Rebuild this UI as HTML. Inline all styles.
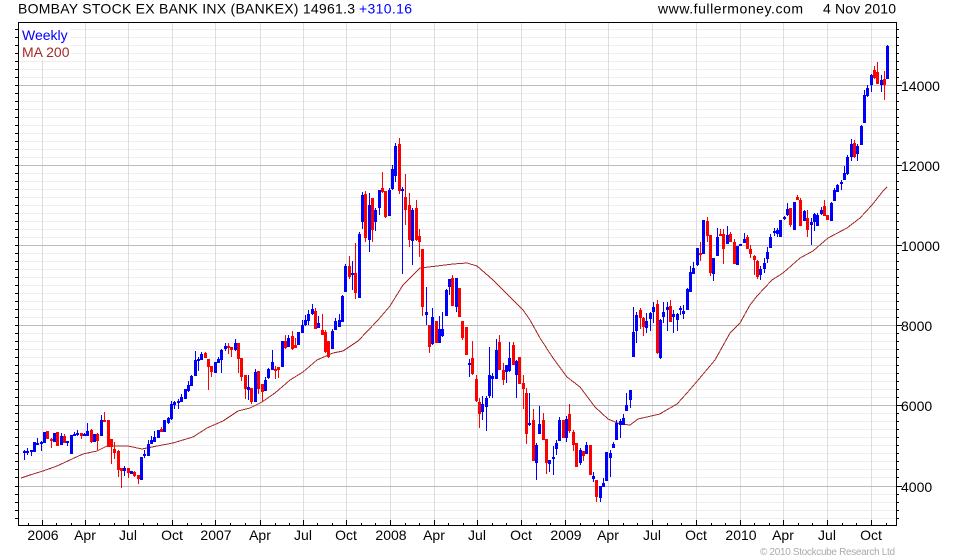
<!DOCTYPE html>
<html><head><meta charset="utf-8"><title>Bombay Stock Ex Bank Inx</title>
<style>html,body{margin:0;padding:0;background:#fff}svg{display:block}text{font-family:"Liberation Sans",Arial,sans-serif;font-size:14px;fill:#000}</style></head>
<body>
<svg xmlns="http://www.w3.org/2000/svg" width="980" height="560" viewBox="0 0 980 560">
<rect width="980" height="560" fill="#fff"/>
<g shape-rendering="crispEdges" fill="none">
<path d="M457.5 29V485M457.5 486V525" stroke="#eee" stroke-width="877" stroke-dasharray="1 7"/>
<path d="M42.5 23V525M85.5 23V525M128.5 23V525M172.5 23V525M215.5 23V525M260.5 23V525M303.5 23V525M346.5 23V525M390.5 23V525M434.5 23V525M477.5 23V525M521.5 23V525M565.5 23V525M608.5 23V525M652.5 23V525M696.5 23V525M740.5 23V525M783.5 23V525M827.5 23V525M871.5 23V525" stroke="#ddd"/>
<path d="M19 85.5H896M19 165.5H896M19 245.5H896M19 325.5H896M19 405.5H896M19 486.5H896" stroke="#bbb"/>
<rect x="19" y="23" width="51" height="37" fill="#fff" stroke="none"/>
<path d="M21 478L30 475L43 471L57 466L72 459L83 454L97 451L107 446L128 446L142 449L157 446L173 443L193 437L207 428L223 421L238 411L250 408L262 402L275 393L290 380L303 372L317 360L333 353L343 351L358 341L378 320L390 306L403 285L420 268L437 266L453 264L467 263L477 266L493 280L510 297L523 310L530 320L540 338L553 358L567 377L580 387L595 407L608 419L620 424L630 425L638 419L660 414L663 412L677 404L687 393L699 379L715 360L730 333L740 323L750 305L757 296L772 280L783 273L800 258L813 251L828 238L847 228L860 218L872 205L883 191L887 187" stroke="#a52a2a" stroke-width="1"/>
</g>
<g shape-rendering="crispEdges">
<path fill="#00f" d="M24 450h1V460h-1zM23 451h3V453h-3zM27 448h1V455h-1zM26 451h3V453h-3zM31 450h1V456h-1zM30 450h3V452h-3zM33 442h3V452h-3zM37 438h1V445h-1zM36 443h3V445h-3zM41 441h1V451h-1zM40 442h3V444h-3zM43 432h3V443h-3zM53 433h3V442h-3zM61 433h1V445h-1zM60 436h3V445h-3zM67 441h1V446h-1zM66 441h3V443h-3zM70 435h3V454h-3zM74 432h1V436h-1zM73 434h3V436h-3zM77 430h1V436h-1zM76 433h3V435h-3zM84 433h1V436h-1zM83 434h3V436h-3zM87 423h1V436h-1zM86 431h3V436h-3zM93 434h3V442h-3zM101 415h1V436h-1zM100 420h3V436h-3zM124 466h1V476h-1zM123 468h3V471h-3zM130 471h3V474h-3zM140 457h3V480h-3zM144 450h1V458h-1zM143 454h3V456h-3zM148 440h1V456h-1zM147 444h3V456h-3zM151 436h1V444h-1zM150 440h3V444h-3zM154 431h1V442h-1zM153 437h3V442h-3zM157 430h3V438h-3zM163 420h3V432h-3zM168 417h1V424h-1zM167 418h3V423h-3zM171 401h1V420h-1zM170 404h3V419h-3zM174 401h1V409h-1zM173 402h3V405h-3zM178 399h1V409h-1zM177 401h3V403h-3zM181 394h1V402h-1zM180 397h3V402h-3zM184 389h3V399h-3zM188 381h1V392h-1zM187 385h3V391h-3zM191 375h1V386h-1zM190 376h3V386h-3zM195 351h1V376h-1zM194 360h3V376h-3zM198 357h1V371h-1zM197 359h3V361h-3zM201 352h1V360h-1zM200 354h3V360h-3zM214 362h3V373h-3zM218 357h1V363h-1zM217 359h3V363h-3zM221 349h1V373h-1zM220 350h3V360h-3zM225 343h1V351h-1zM224 346h3V349h-3zM235 339h1V351h-1zM234 343h3V350h-3zM248 375h1V400h-1zM247 387h3V390h-3zM255 369h1V402h-1zM254 372h3V402h-3zM265 377h1V391h-1zM264 380h3V391h-3zM268 368h1V379h-1zM267 369h3V378h-3zM272 350h1V370h-1zM271 362h3V370h-3zM281 341h3V367h-3zM288 335h1V347h-1zM287 338h3V347h-3zM297 332h3V345h-3zM302 320h1V333h-1zM301 325h3V333h-3zM305 315h1V326h-1zM304 320h3V325h-3zM308 310h1V325h-1zM307 314h3V321h-3zM312 304h1V315h-1zM311 309h3V314h-3zM318 316h1V328h-1zM317 323h3V328h-3zM332 329h1V349h-1zM331 331h3V349h-3zM335 318h1V330h-1zM334 321h3V330h-3zM339 314h1V327h-1zM338 320h3V327h-3zM342 295h1V322h-1zM341 296h3V322h-3zM345 264h1V292h-1zM344 266h3V292h-3zM352 261h1V290h-1zM351 273h3V275h-3zM359 232h1V298h-1zM358 234h3V298h-3zM362 192h1V229h-1zM361 195h3V222h-3zM369 193h1V252h-1zM368 205h3V240h-3zM375 208h1V231h-1zM374 210h3V222h-3zM379 190h1V215h-1zM378 190h3V208h-3zM389 188h1V216h-1zM388 190h3V216h-3zM392 165h1V190h-1zM391 169h3V189h-3zM395 143h1V182h-1zM394 146h3V176h-3zM402 187h1V274h-1zM401 189h3V191h-3zM412 208h1V265h-1zM411 210h3V241h-3zM426 287h1V325h-1zM425 312h3V315h-3zM432 308h1V345h-1zM431 317h3V344h-3zM439 316h1V343h-1zM438 329h3V343h-3zM442 312h1V337h-1zM441 329h3V336h-3zM446 289h1V316h-1zM445 290h3V316h-3zM449 279h1V295h-1zM448 279h3V287h-3zM456 278h1V312h-1zM455 278h3V307h-3zM469 359h1V377h-1zM468 363h3V365h-3zM482 396h1V420h-1zM481 404h3V412h-3zM486 396h1V431h-1zM485 398h3V407h-3zM489 347h1V398h-1zM488 375h3V396h-3zM492 373h1V398h-1zM491 376h3V379h-3zM496 339h1V379h-1zM495 350h3V379h-3zM506 365h1V383h-1zM505 365h3V372h-3zM509 342h1V372h-1zM508 358h3V371h-3zM516 360h1V398h-1zM515 361h3V375h-3zM529 393h1V426h-1zM528 423h3V425h-3zM536 443h1V480h-1zM535 445h3V463h-3zM539 406h1V434h-1zM538 424h3V434h-3zM549 460h1V472h-1zM548 460h3V464h-3zM553 446h1V475h-1zM552 457h3V459h-3zM556 440h1V455h-1zM555 443h3V449h-3zM559 417h1V441h-1zM558 420h3V441h-3zM566 416h1V442h-1zM565 419h3V438h-3zM580 448h1V465h-1zM579 450h3V463h-3zM586 442h1V454h-1zM585 445h3V454h-3zM593 472h1V482h-1zM592 476h3V479h-3zM600 486h1V502h-1zM599 486h3V498h-3zM603 478h1V487h-1zM602 483h3V487h-3zM605 452h3V481h-3zM610 450h1V477h-1zM609 453h3V458h-3zM613 442h1V448h-1zM612 444h3V448h-3zM616 420h1V440h-1zM615 423h3V440h-3zM620 419h1V438h-1zM619 421h3V425h-3zM623 414h1V425h-1zM622 418h3V425h-3zM626 393h1V411h-1zM625 405h3V411h-3zM630 390h1V408h-1zM629 390h3V400h-3zM633 307h1V357h-1zM632 332h3V357h-3zM636 312h1V343h-1zM635 315h3V331h-3zM646 313h1V333h-1zM645 321h3V328h-3zM650 312h1V331h-1zM649 313h3V319h-3zM653 302h1V323h-1zM652 307h3V312h-3zM660 319h1V359h-1zM659 320h3V358h-3zM663 302h1V323h-1zM662 312h3V317h-3zM667 302h1V331h-1zM666 307h3V310h-3zM673 310h1V333h-1zM672 314h3V317h-3zM677 313h1V331h-1zM676 314h3V320h-3zM680 306h1V315h-1zM679 308h3V310h-3zM683 305h1V319h-1zM682 311h3V314h-3zM687 288h1V310h-1zM686 289h3V310h-3zM690 266h1V292h-1zM689 272h3V292h-3zM693 262h1V274h-1zM692 268h3V274h-3zM697 248h1V266h-1zM696 248h3V265h-3zM702 220h3V254h-3zM713 258h1V281h-1zM712 258h3V274h-3zM717 228h1V256h-1zM716 237h3V256h-3zM727 226h1V244h-1zM726 235h3V244h-3zM736 246h3V265h-3zM740 244h1V246h-1zM739 244h3V246h-3zM744 233h1V243h-1zM743 239h3V243h-3zM760 266h1V280h-1zM759 269h3V275h-3zM764 258h1V273h-1zM763 263h3V269h-3zM767 247h1V263h-1zM766 252h3V259h-3zM770 234h1V248h-1zM769 237h3V248h-3zM774 228h1V236h-1zM773 231h3V233h-3zM777 228h1V237h-1zM776 230h3V234h-3zM779 220h3V237h-3zM784 216h1V220h-1zM783 217h3V219h-3zM787 203h1V216h-1zM786 209h3V215h-3zM793 202h3V230h-3zM804 210h1V221h-1zM803 211h3V221h-3zM811 218h1V245h-1zM810 222h3V225h-3zM814 213h1V231h-1zM813 214h3V222h-3zM817 213h1V226h-1zM816 215h3V226h-3zM821 207h1V215h-1zM820 210h3V214h-3zM831 202h1V221h-1zM830 203h3V221h-3zM834 188h1V201h-1zM833 190h3V201h-3zM837 184h1V192h-1zM836 185h3V192h-3zM841 180h1V190h-1zM840 182h3V184h-3zM844 166h1V180h-1zM843 173h3V180h-3zM847 155h1V175h-1zM846 157h3V174h-3zM851 139h1V161h-1zM850 144h3V157h-3zM857 144h1V161h-1zM856 146h3V154h-3zM861 125h1V145h-1zM860 126h3V145h-3zM864 90h1V123h-1zM863 95h3V123h-3zM867 85h1V97h-1zM866 88h3V96h-3zM871 74h1V92h-1zM870 75h3V85h-3zM881 75h1V92h-1zM880 80h3V85h-3zM887 45h1V79h-1zM886 46h3V79h-3z"/>
<path fill="#f00" d="M46 431h3V439h-3zM51 438h1V448h-1zM50 439h3V441h-3zM56 432h3V446h-3zM64 434h1V443h-1zM63 436h3V443h-3zM81 433h1V439h-1zM80 433h3V436h-3zM91 429h1V443h-1zM90 430h3V442h-3zM97 433h1V450h-1zM96 434h3V441h-3zM104 412h1V422h-1zM103 420h3V422h-3zM107 420h3V447h-3zM111 439h1V464h-1zM110 439h3V447h-3zM114 442h1V459h-1zM113 449h3V453h-3zM118 450h1V477h-1zM117 451h3V470h-3zM121 468h1V488h-1zM120 468h3V471h-3zM128 468h1V478h-1zM127 468h3V473h-3zM134 471h1V477h-1zM133 472h3V476h-3zM138 475h1V484h-1zM137 475h3V479h-3zM161 427h1V432h-1zM160 429h3V432h-3zM205 352h1V358h-1zM204 353h3V358h-3zM208 359h1V390h-1zM207 359h3V367h-3zM211 366h1V377h-1zM210 366h3V372h-3zM228 343h1V354h-1zM227 346h3V348h-3zM231 347h1V357h-1zM230 347h3V350h-3zM238 343h1V373h-1zM237 343h3V359h-3zM241 358h1V381h-1zM240 358h3V377h-3zM245 375h1V399h-1zM244 375h3V389h-3zM251 388h1V404h-1zM250 388h3V402h-3zM258 371h1V394h-1zM257 371h3V389h-3zM262 384h1V402h-1zM261 384h3V392h-3zM275 366h1V379h-1zM274 369h3V371h-3zM278 367h1V378h-1zM277 367h3V370h-3zM285 335h1V349h-1zM284 341h3V348h-3zM292 331h1V350h-1zM291 336h3V349h-3zM295 338h1V348h-1zM294 345h3V348h-3zM315 308h1V329h-1zM314 311h3V329h-3zM322 314h1V335h-1zM321 330h3V335h-3zM325 330h1V353h-1zM324 332h3V352h-3zM328 341h1V358h-1zM327 341h3V357h-3zM349 256h1V279h-1zM348 266h3V277h-3zM355 243h1V299h-1zM354 273h3V293h-3zM365 191h1V242h-1zM364 194h3V238h-3zM372 198h1V242h-1zM371 198h3V230h-3zM382 172h1V193h-1zM381 188h3V192h-3zM385 191h1V218h-1zM384 191h3V217h-3zM399 138h1V194h-1zM398 144h3V191h-3zM405 174h1V225h-1zM404 197h3V210h-3zM409 193h1V247h-1zM408 205h3V240h-3zM416 200h1V241h-1zM415 208h3V240h-3zM419 229h1V257h-1zM418 236h3V242h-3zM422 249h1V316h-1zM421 249h3V307h-3zM429 325h1V353h-1zM428 325h3V347h-3zM435 321h3V343h-3zM452 275h1V306h-1zM451 278h3V306h-3zM458 288h3V317h-3zM462 321h1V340h-1zM461 321h3V338h-3zM465 327h3V355h-3zM472 341h1V375h-1zM471 358h3V374h-3zM476 375h1V402h-1zM475 379h3V401h-3zM479 398h1V428h-1zM478 402h3V414h-3zM499 335h1V370h-1zM498 342h3V370h-3zM503 363h1V385h-1zM502 370h3V380h-3zM513 342h1V365h-1zM512 345h3V365h-3zM518 357h3V384h-3zM523 375h1V409h-1zM522 383h3V389h-3zM526 388h1V444h-1zM525 393h3V434h-3zM533 409h1V461h-1zM532 420h3V461h-3zM543 413h1V440h-1zM542 420h3V440h-3zM546 439h1V474h-1zM545 439h3V463h-3zM562 420h3V438h-3zM569 404h1V433h-1zM568 414h3V431h-3zM573 430h1V451h-1zM572 432h3V445h-3zM575 443h3V467h-3zM583 451h1V461h-1zM582 451h3V456h-3zM589 445h3V475h-3zM596 480h1V502h-1zM595 480h3V497h-3zM640 308h1V329h-1zM639 310h3V318h-3zM643 317h1V336h-1zM642 318h3V327h-3zM657 300h1V354h-1zM656 304h3V353h-3zM670 300h1V322h-1zM669 306h3V322h-3zM700 242h1V261h-1zM699 253h3V255h-3zM707 217h1V242h-1zM706 221h3V236h-3zM710 235h1V276h-1zM709 235h3V273h-3zM720 229h1V236h-1zM719 234h3V236h-3zM723 229h1V264h-1zM722 234h3V249h-3zM730 232h1V242h-1zM729 234h3V242h-3zM734 239h1V264h-1zM733 242h3V264h-3zM747 235h1V249h-1zM746 237h3V249h-3zM750 245h1V258h-1zM749 249h3V254h-3zM754 255h1V275h-1zM753 256h3V260h-3zM757 260h1V279h-1zM756 261h3V277h-3zM790 208h1V227h-1zM789 208h3V225h-3zM797 195h1V200h-1zM796 197h3V200h-3zM800 198h1V226h-1zM799 200h3V226h-3zM807 210h1V237h-1zM806 218h3V230h-3zM824 200h1V216h-1zM823 206h3V216h-3zM827 215h1V220h-1zM826 215h3V220h-3zM854 140h1V158h-1zM853 143h3V157h-3zM874 66h1V79h-1zM873 70h3V78h-3zM877 62h1V84h-1zM876 72h3V84h-3zM884 71h1V100h-1zM883 79h3V85h-3z"/>
<g fill="none" stroke="#000">
<path d="M16.5 29V485M16.5 486V525M897.5 29V485M897.5 486V525" stroke-width="3" stroke-dasharray="1 7"/>
<path d="M15 85.5h3M15 165.5h3M15 245.5h3M15 325.5h3M15 405.5h3M15 486.5h3M897 85.5h5M897 165.5h5M897 245.5h5M897 325.5h5M897 405.5h5M897 486.5h5"/>
<path d="M42.5 520v5M85.5 520v5M128.5 520v5M172.5 520v5M215.5 520v5M260.5 520v5M303.5 520v5M346.5 520v5M390.5 520v5M434.5 520v5M477.5 520v5M521.5 520v5M565.5 520v5M608.5 520v5M652.5 520v5M696.5 520v5M740.5 520v5M783.5 520v5M827.5 520v5M871.5 520v5M28.5 523v2M56.5 523v2M71.5 523v2M99.5 523v2M114.5 523v2M143.5 523v2M157.5 523v2M187.5 523v2M201.5 523v2M230.5 523v2M245.5 523v2M275.5 523v2M289.5 523v2M317.5 523v2M332.5 523v2M361.5 523v2M375.5 523v2M405.5 523v2M419.5 523v2M448.5 523v2M463.5 523v2M492.5 523v2M506.5 523v2M536.5 523v2M550.5 523v2M580.5 523v2M594.5 523v2M623.5 523v2M637.5 523v2M667.5 523v2M681.5 523v2M711.5 523v2M725.5 523v2M754.5 523v2M769.5 523v2M798.5 523v2M812.5 523v2M842.5 523v2M856.5 523v2M886.5 523v2"/>
<rect x="18.5" y="22.5" width="878" height="503" stroke-width="1"/>
</g>
</g>
<text x="18" y="13.5" textLength="337" lengthAdjust="spacing">BOMBAY STOCK EX BANK INX (BANKEX) 14961.3</text>
<text x="359" y="13.5" textLength="53" lengthAdjust="spacing" style="fill:#00f">+310.16</text>
<text x="658" y="13.5" textLength="145" lengthAdjust="spacing">www.fullermoney.com</text>
<text x="823" y="13.5" textLength="73" lengthAdjust="spacing">4 Nov 2010</text>
<text x="22" y="40" style="fill:#00f">Weekly</text>
<text x="22" y="57" style="fill:#a52a2a">MA 200</text>
<text x="901" y="91">14000</text>
<text x="901" y="171">12000</text>
<text x="901" y="251">10000</text>
<text x="901" y="331">8000</text>
<text x="901" y="411">6000</text>
<text x="901" y="492">4000</text>
<g text-anchor="middle">
<text x="43" y="540">2006</text><text x="85" y="540">Apr</text><text x="128" y="540">Jul</text><text x="172" y="540">Oct</text><text x="216" y="540">2007</text><text x="260" y="540">Apr</text><text x="303" y="540">Jul</text><text x="346" y="540">Oct</text><text x="391" y="540">2008</text><text x="434" y="540">Apr</text><text x="477" y="540">Jul</text><text x="521" y="540">Oct</text><text x="566" y="540">2009</text><text x="608" y="540">Apr</text><text x="652" y="540">Jul</text><text x="696" y="540">Oct</text><text x="741" y="540">2010</text><text x="783" y="540">Apr</text><text x="827" y="540">Jul</text><text x="871" y="540">Oct</text>
</g>
<text x="760" y="555" textLength="135" lengthAdjust="spacing" style="font-size:10px;fill:#aaa">© 2010 Stockcube Research Ltd</text>
</svg>
</body></html>
